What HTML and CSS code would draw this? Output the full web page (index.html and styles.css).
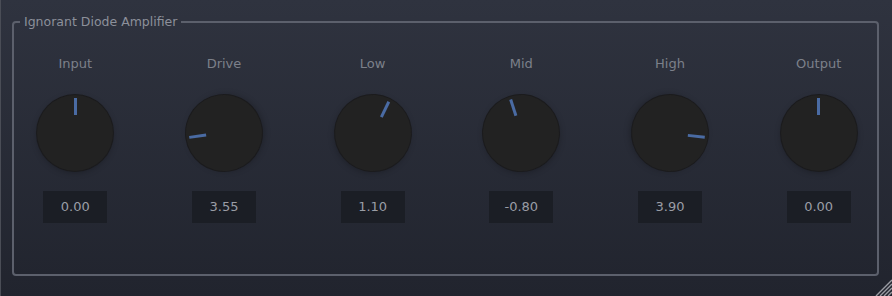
FILE: index.html
```html
<!DOCTYPE html>
<html lang="en">
<head>
  <meta charset="UTF-8" />
  <title>Ignorant Diode Amplifier</title>
  <link rel="stylesheet" href="styles.css">
</head>
<body>
  <div class="plugin">
    <fieldset class="group">
      <legend>Ignorant Diode Amplifier</legend>
      <div class="knobs">
        <div class="control">
          <span class="label">Input</span>
          <div class="knob" style="--angle: 0deg;"></div>
          <div class="value">0.00</div>
        </div>
        <div class="control">
          <span class="label">Drive</span>
          <div class="knob" style="--angle: -98deg;"></div>
          <div class="value">3.55</div>
        </div>
        <div class="control">
          <span class="label">Low</span>
          <div class="knob" style="--angle: 26deg;"></div>
          <div class="value">1.10</div>
        </div>
        <div class="control">
          <span class="label">Mid</span>
          <div class="knob" style="--angle: -18deg;"></div>
          <div class="value">-0.80</div>
        </div>
        <div class="control">
          <span class="label">High</span>
          <div class="knob" style="--angle: 96deg;"></div>
          <div class="value">3.90</div>
        </div>
        <div class="control">
          <span class="label">Output</span>
          <div class="knob" style="--angle: 0deg;"></div>
          <div class="value">0.00</div>
        </div>
      </div>
    </fieldset>

    <svg class="grip" width="18" height="18" viewBox="0 0 18 18">
      <path d="M18 2 L2 18 M18 6 L6 18 M18 10 L10 18 M18 14 L14 18" stroke="#9a9ca3" stroke-width="1.4" />
    </svg>
  </div>
</body>
</html>
```

FILE: styles.css
```css
html, body {
  margin: 0;
  padding: 0;
}

body {
  font-family: "DejaVu Sans", sans-serif;
  background: #22252f;
}

.plugin {
  position: relative;
  width: 892px;
  height: 296px;
  box-sizing: border-box;
  border-left: 1px solid #4a4d56;
  background: linear-gradient(#2f333f, #21242e);
  padding-top: 14px;
  overflow: hidden;
}

.group {
  margin: 0 13px 0 11px;
  padding: 0;
  height: 262px;
  box-sizing: border-box;
  border: 2px solid #5c606c;
  border-radius: 4px;
}

.group legend {
  margin-left: 6px;
  padding: 0 4px;
  font-size: 12.5px;
  color: #8c909a;
}

.knobs {
  display: grid;
  grid-template-columns: repeat(6, 1fr);
  margin: 27px -16px 0 -13px;
}

.control {
  display: flex;
  flex-direction: column;
  align-items: center;
}

.label {
  font-size: 13px;
  line-height: 16px;
  color: #7c808a;
}

.knob {
  position: relative;
  width: 76px;
  height: 76px;
  margin-top: 23px;
  border-radius: 50%;
  background: #222222;
  box-shadow: 0 0 0 1px #1b1b1d, 0 2px 6px rgba(0, 0, 0, 0.25);
  transform: rotate(var(--angle));
}

.knob::after {
  content: "";
  position: absolute;
  left: 50%;
  top: 3px;
  width: 3px;
  height: 17px;
  margin-left: -1.5px;
  background: #4a6ba3;
}

.value {
  width: 64px;
  height: 32px;
  margin-top: 20px;
  background: #1b1e25;
  color: #9a9da5;
  font-size: 13px;
  line-height: 32px;
  text-align: center;
}

.grip {
  position: absolute;
  right: 0;
  bottom: 0;
}
```
